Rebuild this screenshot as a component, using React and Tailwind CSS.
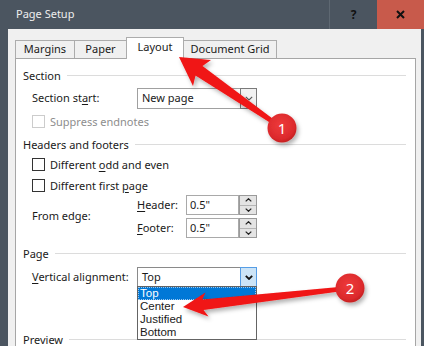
import React from "react";

const U = ({ children }) => (
  <span className="underline decoration-1 underline-offset-[2px]">{children}</span>
);

const Box = ({ disabled }) => (
  <span
    className={
      disabled
        ? "w-[13px] h-[13px] border border-[#cccccc] bg-white shrink-0"
        : "w-[13px] h-[13px] border border-[#333333] bg-white shrink-0"
    }
  />
);

const Header = ({ children }) => (
  <div className="h-[16px] pl-[7px] pr-[9px] flex items-center gap-[6px]">
    <span className="leading-none">{children}</span>
    <span className="flex-1 h-px bg-[#dcdcdc]" />
  </div>
);

const Chevron = ({ bold }) => (
  <svg width="8" height="5" viewBox="0 0 8 5">
    <polyline
      points="0.8,0.8 4,4 7.2,0.8"
      fill="none"
      stroke={bold ? "#111" : "#555"}
      strokeWidth={bold ? 1.8 : 1.1}
    />
  </svg>
);

const Spin = ({ up }) => (
  <svg width="7" height="4" viewBox="0 0 7 4">
    <polyline
      points={up ? "0.7,3.4 3.5,0.7 6.3,3.4" : "0.7,0.6 3.5,3.3 6.3,0.6"}
      fill="none"
      stroke="#222"
      strokeWidth="1.2"
    />
  </svg>
);

const Spinner = ({ u, rest }) => (
  <div className="h-[20px] flex items-center">
    <span className="w-[49px]">
      <U>{u}</U>
      {rest}
    </span>
    <div className="w-[53px] h-full border border-[#a9a9a9] bg-white flex items-center pl-[3px]">
      0.5"
    </div>
    <div className="w-[18px] h-full flex flex-col border border-[#9a9a9a] bg-[#e4e4e4]">
      <div className="flex-1 flex items-center justify-center border-b border-[#b5b5b5]">
        <Spin up />
      </div>
      <div className="flex-1 flex items-center justify-center">
        <Spin />
      </div>
    </div>
  </div>
);

export default function App() {
  return (
    <div className="relative w-[424px] h-[346px] overflow-hidden bg-[#4b5560] text-[11px] text-[#1a1a1a] font-['Noto_Sans',sans-serif]">
      <div className="flex flex-col h-full">
        {/* title bar */}
        <div className="h-[29px] shrink-0 flex items-center">
          <span className="pl-[16px] flex-1 text-[#eeeeee]">Page Setup</span>
          <div className="w-[48px] h-full border-l border-[#5e6872] flex items-center justify-center font-bold text-[12px] text-[#111]">
            ?
          </div>
          <div className="w-[47px] h-full bg-[#c85a4b] flex items-center justify-center">
            <svg width="9" height="9" viewBox="0 0 9 9">
              <path d="M1 1 L8 8 M8 1 L1 8" stroke="#111" strokeWidth="2" />
            </svg>
          </div>
        </div>

        {/* body */}
        <div className="flex-1 ml-[8px] mr-[3px] bg-[#f0f0f0] flex flex-col min-h-0">
          <div className="h-[29px] pl-[7px] flex items-end shrink-0">
            <div className="w-[60px] h-[18px] border border-b-0 border-[#acacac] flex items-center justify-center">
              Margins
            </div>
            <div className="-ml-px w-[53px] h-[18px] border border-b-0 border-[#acacac] flex items-center justify-center">
              Paper
            </div>
            <div className="-ml-px w-[58px] h-[22px] -mb-px relative z-10 bg-white border border-b-0 border-[#acacac] flex items-center justify-center pb-[2px]">
              Layout
            </div>
            <div className="-ml-px w-[94px] h-[18px] border border-b-0 border-[#acacac] flex items-center justify-center">
              Document Grid
            </div>
          </div>

          <div className="flex-1 ml-[7px] mr-[5px] border border-b-0 border-[#a6a6a6] bg-white flex flex-col">
            <div className="mt-[8px]">
              <Header>Section</Header>
            </div>
            <div className="mt-[5px] h-[21px] pl-[16px] flex items-center">
              <span className="w-[105px]">
                Section st<U>a</U>rt:
              </span>
              <div className="w-[120px] h-full flex border border-[#a0a0a0] bg-white">
                <div className="flex-1 flex items-center pl-[4px]">New page</div>
                <div className="w-[17px] -my-px -mr-px border border-[#7a7a7a] bg-[#f2f2f2] flex items-center justify-center">
                  <Chevron />
                </div>
              </div>
            </div>
            <div className="mt-[6px] h-[13px] pl-[16px] flex items-center gap-[5px] text-[#8d8d8d]">
              <Box disabled />
              <span className="leading-[13px]">Suppress endnotes</span>
            </div>

            <div className="mt-[8px]">
              <Header>Headers and footers</Header>
            </div>
            <div className="mt-[6px] h-[13px] pl-[16px] flex items-center gap-[5px]">
              <Box />
              <span className="leading-[13px]">
                Different <U>o</U>dd and even
              </span>
            </div>
            <div className="mt-[8px] h-[13px] pl-[16px] flex items-center gap-[5px]">
              <Box />
              <span className="leading-[13px]">
                Different first <U>p</U>age
              </span>
            </div>
            <div className="mt-[3px] pl-[16px] flex items-center">
              <span className="w-[105px]">From edge:</span>
              <div className="flex flex-col gap-[3px]">
                <Spinner u="H" rest="eader:" />
                <Spinner u="F" rest="ooter:" />
              </div>
            </div>

            <div className="mt-[7px]">
              <Header>Page</Header>
            </div>
            <div className="mt-[6px] h-[20px] pl-[16px] flex items-center">
              <span className="w-[105px]">
                <U>V</U>ertical alignment:
              </span>
              <div className="relative w-[120px] h-full flex border border-[#8a8a8a] bg-white">
                <div className="flex-1 flex items-center pl-[4px]">Top</div>
                <div className="w-[17px] -my-px -mr-px border border-[#569de5] bg-[#cce4f7] flex items-center justify-center">
                  <Chevron bold />
                </div>
                <div className="absolute left-[-1px] top-full w-[120px] border border-[#646464] bg-white flex flex-col z-10 font-['Liberation_Sans',sans-serif] text-[11.5px]">
                  <div className="h-[13px] leading-[11px] flex items-center pl-[1px] bg-[#0078d7] text-white border border-dotted border-[#9cc8f0]">
                    Top
                  </div>
                  <div className="h-[13px] leading-[13px] flex items-center pl-[2px]">Center</div>
                  <div className="h-[13px] leading-[13px] flex items-center pl-[2px]">Justified</div>
                  <div className="h-[13px] leading-[13px] flex items-center pl-[2px]">Bottom</div>
                </div>
              </div>
            </div>
            <div className="mt-[44px]">
              <Header>Preview</Header>
            </div>
          </div>
        </div>
      </div>

      {/* callout arrows */}
      <svg
        className="absolute left-0 top-0 pointer-events-none z-20"
        width="424"
        height="346"
        viewBox="0 0 424 346"
      >
        <defs>
          <filter id="sh" x="-30%" y="-30%" width="160%" height="160%">
            <feDropShadow dx="2" dy="3" stdDeviation="2" floodColor="#000" floodOpacity="0.3" />
          </filter>
          <radialGradient id="cg" cx="45%" cy="40%" r="60%">
            <stop offset="0" stopColor="#ee3a3b" />
            <stop offset="0.8" stopColor="#dc2a2c" />
            <stop offset="1" stopColor="#c51f21" />
          </radialGradient>
        </defs>
        <g filter="url(#sh)">
          <polygon
            fill="#f01414"
            points="179,57 193,86 195.5,75.5 280.9,129.6 283.1,126.4 202.5,66 211,60"
          />
          <circle cx="282" cy="128" r="14.5" fill="url(#cg)" />
        </g>
        <text
          x="282"
          y="133.5"
          textAnchor="middle"
          fontSize="15"
          fill="#ffffff"
          fontFamily="Noto Sans, sans-serif"
        >
          1
        </text>
        <g filter="url(#sh)">
          <polygon
            fill="#f01414"
            points="183,307 208.5,316.5 203.5,310 350.2,290 349.8,286 202.3,299.5 205.5,292.5"
          />
          <circle cx="350" cy="288" r="14.5" fill="url(#cg)" />
        </g>
        <text
          x="350"
          y="293.5"
          textAnchor="middle"
          fontSize="15"
          fill="#ffffff"
          fontFamily="Noto Sans, sans-serif"
        >
          2
        </text>
      </svg>
    </div>
  );
}
